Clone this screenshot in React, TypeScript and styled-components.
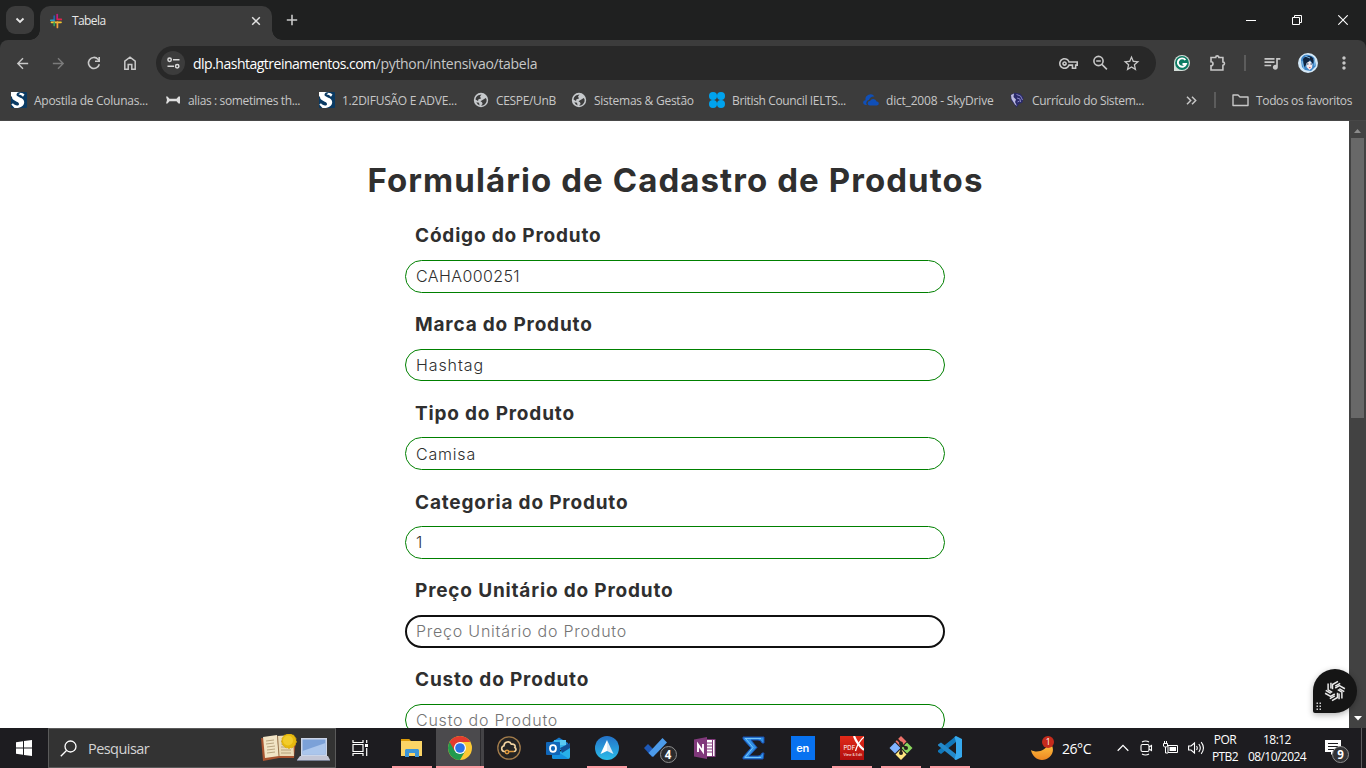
import React from 'react';
import styled, { createGlobalStyle } from 'styled-components';
import { MdArrowBack, MdArrowForward, MdOutlineVpnKey, MdStarBorder, MdQueueMusic, MdMoreVert } from 'react-icons/md';

const GlobalStyle = createGlobalStyle`
  * { box-sizing: border-box; }
  body { margin: 0; background: #fff; overflow: hidden; }
  svg { display: block; flex: none; }
`;

const uiFont = `'Open Sans', 'Noto Sans', sans-serif`;

const Screen = styled.div`
  width: 1366px;
  height: 768px;
  display: flex;
  flex-direction: column;
  overflow: hidden;
  font-family: ${uiFont};
  white-space: nowrap;
`;

/* ---------- browser chrome ---------- */
const TabStrip = styled.header`
  height: 40px;
  flex: none;
  display: flex;
  align-items: flex-end;
  padding-left: 6px;
  background: #1f2020;
`;
const TabSearch = styled.button`
  width: 28px;
  height: 28px;
  margin: 0 6px 6px 0;
  padding: 0;
  border: 0;
  border-radius: 9px;
  background: #3c3c3c;
  display: grid;
  place-items: center;
`;
const Tab = styled.div`
  position: relative;
  width: 232px;
  height: 34px;
  border-radius: 10px 10px 0 0;
  background: #3c3c3c;
  display: flex;
  align-items: center;
  padding: 0 11px 5px 8px;
  &::before, &::after {
    content: '';
    position: absolute;
    bottom: 0;
    width: 10px;
    height: 10px;
  }
  &::before { left: -10px; background: radial-gradient(circle at 0 0, transparent 9.5px, #3c3c3c 10px); }
  &::after { right: -10px; background: radial-gradient(circle at 100% 0, transparent 9.5px, #3c3c3c 10px); }
`;
const TabTitle = styled.span`
  flex: 1;
  margin-left: 8px;
  font-size: 12px;
  letter-spacing: -0.6px;
  color: #e8e8e8;
`;
const NewTab = styled.div`
  margin: 0 0 14px 14px;
`;
const WindowControls = styled.div`
  display: flex;
  margin-left: auto;
  height: 40px;
`;
const WindowButton = styled.div`
  width: 46px;
  display: grid;
  place-items: center;
`;
const ToolbarArea = styled.div`
  flex: none;
  height: 81px;
  background: #1f2020;
`;
const Bars = styled.div`
  height: 81px;
  border-radius: 8px 8px 0 0;
  border-bottom: 1px solid #474747;
  background: #3c3c3c;
`;
const NavBar = styled.nav`
  height: 46px;
  display: flex;
  align-items: center;
  padding-left: 14px;
`;
const NavButtons = styled.div`
  flex: none;
  display: flex;
  gap: 20px;
  width: 142px;
`;
const NavIcon = styled.div<{ $dim?: boolean }>`
  width: 16px;
  height: 16px;
  display: grid;
  place-items: center;
  color: ${(p) => (p.$dim ? '#7b7b7b' : '#c9c9c9')};
`;
const AddressBar = styled.div`
  flex: none;
  width: 1000px;
  height: 34px;
  border-radius: 17px;
  background: #282828;
  display: flex;
  align-items: center;
  padding: 0 15px 0 5px;
  color: #c7c7c7;
`;
const SiteInfo = styled.div`
  width: 24px;
  height: 24px;
  border-radius: 12px;
  background: #3c3c3c;
  display: grid;
  place-items: center;
`;
const Url = styled.div`
  flex: 1;
  margin-left: 8px;
  font-size: 14px;
  letter-spacing: -0.3px;
  color: #c7c7c7;
  b { font-weight: 400; color: #fff; letter-spacing: -0.5px; }
`;
const AddressIcons = styled.div`
  display: flex;
  align-items: center;
  gap: 13px;
`;
const Extensions = styled.div`
  flex: 1;
  display: flex;
  align-items: center;
  padding-left: 17px;
  color: #c7c7c7;
`;
const Slot = styled.div<{ $w: number }>`
  flex: none;
  width: ${(p) => p.$w}px;
  display: grid;
  place-items: center;
`;
const Divider = styled.span`
  flex: none;
  width: 2px;
  height: 16px;
  background: #5c5c5c;
`;
const BookmarkBar = styled.div`
  height: 28px;
  display: flex;
  align-items: center;
  padding-left: 11px;
  color: #c7c7c7;
`;
const Bookmark = styled.div<{ $w: number; $ls: number }>`
  flex: none;
  width: ${(p) => p.$w}px;
  display: flex;
  align-items: center;
  gap: 7px;
  font-size: 12px;
  letter-spacing: ${(p) => p.$ls}px;
`;

/* ---------- web page ---------- */
const Viewport = styled.div`
  height: 607px;
  flex: none;
  display: flex;
  overflow: hidden;
  background: #fff;
`;
const Page = styled.main`
  width: 1349px;
  height: 607px;
  overflow: hidden;
  font-family: 'Inter', sans-serif;
  color: #2f2f2f;
`;
const Title = styled.h1`
  margin: 38px 0 0;
  padding-left: 2px;
  height: 42px;
  line-height: 42px;
  text-align: center;
  font-size: 33px;
  font-weight: 700;
  letter-spacing: 1.08px;
`;
const Form = styled.form`
  width: 540px;
  margin: 0 auto;
  padding-top: 22.4px;
`;
const Field = styled.div`
  height: 88.75px;
`;
const Label = styled.label`
  display: block;
  height: 36.5px;
  padding-left: 10.5px;
  line-height: 26px;
  font-size: 19px;
  font-weight: 700;
  letter-spacing: 0.82px;
`;
const Input = styled.input<{ $focused?: boolean; $ls?: number }>`
  display: block;
  width: 540px;
  height: 32.7px;
  padding: 0 ${(p) => (p.$focused ? 9.5 : 10.5)}px;
  border: ${(p) => (p.$focused ? '2px solid #101010' : '1px solid #008000')};
  border-radius: 17px;
  outline: 0;
  background: #fff;
  color: #2f2f2f;
  font: 300 16px 'Inter', sans-serif;
  letter-spacing: ${(p) => p.$ls ?? 0.77}px;
  &::placeholder { color: #757575; opacity: 1; }
`;
const Scrollbar = styled.div`
  width: 17px;
  background: #424242;
  display: flex;
  flex-direction: column;
  align-items: center;
  justify-content: space-between;
  padding: 7px 0;
`;
const Thumb = styled.div`
  width: 13px;
  height: 280px;
  margin: 5px 0 auto;
  background: #686868;
`;
const Assistant = styled.div`
  position: absolute;
  left: 1313px;
  top: 669px;
  width: 44px;
  height: 44px;
  border-radius: 22px 22px 22px 2px;
  background: #151515;
  box-shadow: 0 2px 6px rgba(0, 0, 0, 0.3);
`;

/* ---------- taskbar ---------- */
const Taskbar = styled.footer`
  height: 40px;
  flex: none;
  display: flex;
  background: #1d1c20;
  color: #fff;
`;
const Start = styled.div`
  width: 48px;
  display: grid;
  place-items: center;
`;
const Search = styled.div`
  width: 288px;
  border: 1px solid #5a5a5a;
  background: #333;
  display: flex;
  align-items: center;
  padding: 0 4px 0 11px;
`;
const SearchText = styled.span`
  flex: 1;
  margin-left: 11px;
  font-size: 14.5px;
  letter-spacing: -0.55px;
  color: #d4d4d4;
`;
const TaskButton = styled.div<{ $open?: boolean; $active?: boolean }>`
  position: relative;
  width: ${(p) => (p.$active ? 48 : 40)}px;
  margin: 0 ${(p) => (p.$active ? 0 : 4.5)}px;
  display: grid;
  place-items: center;
  background: ${(p) => (p.$active ? 'linear-gradient(90deg, #4b4a4d 44px, #2c2b2e 44px, #2c2b2e 45px, #444346 45px)' : 'none')};
  border-bottom: ${(p) => (p.$open ? '2px solid #fb9ba2' : '2px solid transparent')};
  padding-top: 2px;
  &:first-child { margin-right: 6.5px; }
`;
const Apps = styled.div`
  display: flex;
`;
const Badge = styled.span<{ $x: number; $y: number; $bg: string; $s: number }>`
  position: absolute;
  left: ${(p) => p.$x}px;
  top: ${(p) => p.$y}px;
  width: ${(p) => p.$s}px;
  height: ${(p) => p.$s}px;
  border-radius: 50%;
  border: ${(p) => (p.$s > 14 ? '1px solid #8d8d8d' : '0')};
  background: ${(p) => p.$bg};
  font-size: ${(p) => (p.$s > 14 ? 11.5 : 8.5)}px;
  font-weight: ${(p) => (p.$s > 14 ? 700 : 400)};
  display: grid;
  place-items: center;
  line-height: 1;
`;
const Tray = styled.div`
  margin-left: auto;
  display: flex;
  align-items: center;
`;
const Weather = styled.div`
  position: relative;
  width: 85px;
  height: 40px;
  display: flex;
  align-items: center;
  gap: 8px;
  font-size: 14px;
  letter-spacing: -0.45px;
`;
const TrayIcons = styled.div`
  display: flex;
  align-items: center;
  width: 95px;
  gap: 9px;
  padding-left: 1px;
`;
const Stack = styled.div<{ $w: number }>`
  width: ${(p) => p.$w}px;
  text-align: center;
  font-size: 12px;
  line-height: 17px;
  letter-spacing: -0.55px;
`;
const Notice = styled.div`
  position: relative;
  width: 46px;
  height: 40px;
  padding: 11px 0 0 10px;
`;
const ShowDesktop = styled.div`
  width: 5px;
  height: 40px;
  border-left: 1px solid #5c5c5e;
`;

/* ---------- icons ---------- */
const HashtagIcon = () => (
  <svg width="16" height="16" viewBox="0 0 16 16" fill="none" strokeWidth="1.7" strokeLinecap="round">
    <path d="M6.200 3v5" stroke="#2463ae" /><path d="M9.200 1.500V6" stroke="#c21f80" />
    <path d="M9.500 6.400h3.800" stroke="#e0244c" /><path d="M2.800 7.300h3" stroke="#2a9cc8" />
    <path d="M3.500 9.300H13" stroke="#f3c52e" /><path d="M6.200 9.800v2.700" stroke="#30a35b" /><path d="M9.400 9v5.500" stroke="#f4a03a" />
  </svg>
);
const SBadge = () => (
  <svg width="16" height="16" viewBox="0 0 16 16">
    <rect width="16" height="16" rx="1" fill="#0a3a63" />
    <path d="M0 0h11.500q-6-.3-6 2.800c0 2.700 7.700 2.600 7.700 7.200 0 3.600-3 6-8 6H3.500L.3 12.500 2 11.300c1.500 2.300 6 3 6 .6C8 9.200 1 9.300 1 5L0 4z" fill="#fff" />
    <path d="M9.500.8q2.500 0 4 1.600L12 4.800Q10 2.500 7.500 2.600z" fill="#fff" />
  </svg>
);
const BowIcon = () => (
  <svg width="16" height="16" viewBox="0 0 16 16"><path d="M1 4.500h1.500l2 2.200h7l2-2.200H15v7h-1.500l-2-2.200h-7l-2 2.200H1l1-3.500z" fill="#dedede" /></svg>
);
const DotsIcon = () => (
  <svg width="16" height="16" viewBox="0 0 16 16" fill="#00a3ee">
    <circle cx="4" cy="4" r="4" /><circle cx="12" cy="4" r="4" /><circle cx="4" cy="12" r="4" /><circle cx="12" cy="12" r="4" />
  </svg>
);
const CloudIcon = () => (
  <svg width="16" height="16" viewBox="0 0 16 16" fill="#0f4fb8">
    <path d="M4 13H2.500a2.400 2.400 0 0 1 0-4.800A5 5 0 0 1 11.500 4.500 5 5 0 0 0 6 8 3 3 0 0 0 4 13z" />
    <path d="M7 13.500a2.300 2.300 0 0 1 0-4.600 3.600 3.600 0 0 1 6.600.6A2 2 0 0 1 14 13.500z" />
  </svg>
);
const BrainIcon = () => (
  <svg width="16" height="16" viewBox="0 0 16 16">
    <path d="M1.500 3 6 .8l5 .7 3.500 4-1 5-3.500 1.500-2.500 3.500-2-3-3.500-4.500z" fill="#2b2b6b" />
    <path d="m2 3 3-1.500L4.500 5 7 7.500 6 10l2 4-2-1.500L2.500 7z" fill="#bdbbe0" />
    <path d="m7.500 2.500 4 1.500 2 4M8 6l3 1 .5 3M8.500 10l2-1" stroke="#8a86c6" fill="none" />
  </svg>
);
const GlobeIcon = () => (
  <svg width="16" height="16" viewBox="0 0 16 16">
    <circle cx="8" cy="8" r="7.200" fill="#c6c9cc" />
    <path d="M2.500 7.500C3 4 5.500 2.600 8.500 2.400L7 4.600l1 1.900-2.500.7L5 9zM7.500 9.300 12.800 6l.8 1.500c.3 2.700-1.100 4.800-3.600 5.900L8 13.500l1.600-1.600L9 10.200zM3.300 10.200l2.700.6.600 2.600q-2.300-.8-3.300-3.200z" fill="#3c3c3c" />
  </svg>
);
const Grammarly = () => (
  <svg width="16" height="16" viewBox="0 0 16 16">
    <path d="M8 0a8 8 0 0 1 0 16H0V8a8 8 0 0 1 8-8z" fill="#d4ded9" /><circle cx="8" cy="8" r="6.900" fill="#0c7b63" />
    <path d="M11.400 5A4.200 4.200 0 1 0 12 9H8.500" fill="none" stroke="#fff" strokeWidth="1.900" />
  </svg>
);
const Avatar = () => (
  <svg width="20" height="20" viewBox="0 0 20 20">
    <circle cx="10" cy="10" r="10" fill="#d4e8f7" />
    <path d="M3 8c0-6 5-7 8-6s6 2 6 6l1 5-5 5-6-1-3-3z" fill="#3c84c6" />
    <path d="M5 6c3-4 9-4 11 1l-1 4-3-4-4 5-2 2z" fill="#10243f" />
    <path d="M8.500 10l3.500-2 2.500 3-.5 4-2.500 2-3-3z" fill="#f4e9ea" /><path d="M9 11h1.500M12.500 11H14" stroke="#173c70" /><path d="M11 14.600h1.500" stroke="#d64c60" />
    <path d="M4 8l2 8M16 6l1 7M7 3l5 2" stroke="#7fbbe8" />
  </svg>
);
const Chrome = () => (
  <svg width="24" height="24" viewBox="0 0 24 24">
    <circle cx="12" cy="12" r="12" fill="#fcc934" />
    <path d="M12 24A12 12 0 0 1 1.610 6L12 12l5.200 3z" fill="#229a4e" />
    <path d="M22.390 6A12 12 0 0 0 1.610 6L6.800 15 12 6z" fill="#e33b2e" />
    <circle cx="12" cy="12" r="6" fill="#fff" /><circle cx="12" cy="12" r="4.800" fill="#2c73e8" />
  </svg>
);
const Explorer = () => (
  <svg width="24" height="24" viewBox="0 0 24 24">
    <path d="M1 3h8l2 2h11v3H1z" fill="#e2a410" /><rect x="1" y="5" width="21" height="15" fill="#fbd466" /><path d="M1 3h8l1 2H1z" fill="#dc9b08" />
    <path d="M5 21v-7l1-1h12l1 1v7h-4v-4H9v4z" fill="#3c95d8" />
  </svg>
);
const CloudGold = () => (
  <svg width="24" height="24" viewBox="0 0 24 24" fill="none">
    <circle cx="12" cy="12" r="11.200" fill="#252423" stroke="#a37c4b" strokeWidth="1.300" />
    <path d="M8.500 15.500H7.200a2.900 2.900 0 0 1-.2-5.700c0-4.300 6-5.300 7.300-1.600 3-.5 4.500 1.300 3.500 3.300 2 1.200 1.200 4-.8 4" stroke="#f3d4a1" strokeWidth="1.600" /><circle cx="10" cy="16" r="1.700" stroke="#dc983e" strokeWidth="1.500" /><path d="M11.500 15.500h5.500" stroke="#dc983e" strokeWidth="1.500" />
  </svg>
);
const Outlook = () => (
  <svg width="24" height="24" viewBox="0 0 24 24">
    <path d="m6 6 7-4.500L22 7v5H6z" fill="#1778c9" /><path d="M8 4h12v10H8z" fill="#35b5ed" /><path d="M14 4h6v5h-6z" fill="#5acbf4" /><path d="m24 9v12q0 2-2 2H8q-2 0-2-2z" fill="#28b0e9" /><path d="m6 12 17 11H8q-2 0-2-2z" fill="#1490df" /><path d="m14 12 10-5v5l-8 5z" fill="#124f95" />
    <rect y="6" width="14" height="13" rx="1" fill="#1066b8" /><ellipse cx="7" cy="12.500" rx="3" ry="3.300" fill="none" stroke="#fff" strokeWidth="1.800" />
  </svg>
);
const ArrowApp = () => (
  <svg width="24" height="24" viewBox="0 0 24 24">
    <defs><linearGradient id="arrowBg" x2="0" y2="1"><stop stopColor="#2472c8" /><stop offset="1" stopColor="#2bbde9" /></linearGradient></defs>
    <circle cx="12" cy="12" r="12" fill="url(#arrowBg)" /><path d="M12 4 5.500 18 12 15z" fill="#fff" /><path d="M12 4l6.500 14-6.500-3z" fill="#dbe9f5" />
  </svg>
);
const Todo = () => (
  <svg width="24" height="24" viewBox="0 0 24 24"><path d="m0 12 4-4 8 8-4 5z" fill="#1d58b7" /><path d="M4.500 17 18.500 2 23 6.500 9 21z" fill="#4c9bea" /></svg>
);
const OneNote = () => (
  <svg width="24" height="24" viewBox="0 0 24 24">
    <rect x="11" y="3.500" width="11" height="17" fill="#fff" stroke="#80397b" /><path d="M14 7h5M14 10h5M14 13h5M14 16h5" stroke="#80397b" /><path d="M19.500 4v16" stroke="#80397b" />
    <path d="M1 3.500 14 1v22L1 20.500z" fill="#80397b" /><path d="M5 16V8.500l5 7V8" fill="none" stroke="#fff" strokeWidth="1.900" />
  </svg>
);
const Sigma = () => (
  <svg width="24" height="24" viewBox="0 0 24 24"><path d="M1 1h21v6h-2q-1-3-4-3H9l6 7.500L7 20h9q3 0 4-3h2l-1 6H1v-2l8-9L1 3z" fill="#2f8fe6" stroke="#1a4fae" strokeWidth="1" /><path d="M3 2.500h16M4 3l7 8.500L3 21.500h16" fill="none" stroke="#7cc8fa" strokeWidth="0.900" /></svg>
);
const Square = styled.div<{ $bg: string }>`
  width: 24px;
  height: 24px;
  background: ${(p) => p.$bg};
  display: grid;
  place-items: center;
  font: 600 11px/1 'Inter', sans-serif;
  letter-spacing: -0.3px;
`;
const PdfTile = styled.div`
  position: relative;
  width: 24px;
  height: 24px;
  background: linear-gradient(#e12a18, #b10e0e);
  font: 6px/1 'Inter', sans-serif;
  padding: 9px 0 0 4px;
  svg { position: absolute; left: 0; top: 0; }
  small { display: block; margin-top: 3px; font-size: 3.5px; }
`;
const GitIcon = () => (
  <svg width="24" height="24" viewBox="0 0 24 24">
    <path d="M12 0 17.500 5.500 12 11 6.500 5.500z" fill="#ec7069" /><path d="M6 6.500 11.500 12 6 17.500.5 12z" fill="#80b3ff" /><path d="M18 6.500 23.500 12 18 17.500 12.500 12z" fill="#8bd75e" /><path d="M12 13 17.500 18.500 12 24 6.500 18.500z" fill="#ffe680" />
    <path d="M8 3l4 4v11M12 8l5 4" stroke="#251f1d" strokeWidth="1.800" fill="none" /><circle cx="12" cy="7.500" r="2" fill="#251f1d" /><circle cx="17" cy="12" r="2" fill="#251f1d" /><circle cx="12" cy="17" r="2" fill="#251f1d" />
  </svg>
);
const Code = () => (
  <svg width="24" height="24" viewBox="0 0 24 24"><path d="M18 0v6L3 18l-3-2v-1.500z" fill="#1178bb" /><path d="M0 8.500 3 6.500 18 18v6L0 9.500z" fill="#2489ca" /><path d="m18 0 6 3v18l-6 3-1.500-.8L18 18V6l-1.500-5z" fill="#36a9ee" /></svg>
);

const bookmarks: [() => React.ReactNode, string, number, number][] = [
  [SBadge, 'Apostila de Colunas...', 154, -0.26],
  [BowIcon, 'alias : sometimes th...', 154, -0.36],
  [SBadge, '1.2DIFUSÃO E ADVE...', 154, -0.25],
  [GlobeIcon, 'CESPE/UnB', 98, -0.33],
  [GlobeIcon, 'Sistemas & Gestão', 138, -0.26],
  [DotsIcon, 'British Council IELTS...', 154, -0.36],
  [CloudIcon, 'dict_2008 - SkyDrive', 146, -0.2],
  [BrainIcon, 'Currículo do Sistem...', 177, -0.31],
];

const fields: { label: string; value?: string; focused?: boolean; ls?: number }[] = [
  { label: 'Código do Produto', value: 'CAHA000251', ls: 0.4 },
  { label: 'Marca do Produto', value: 'Hashtag', ls: 0.9 },
  { label: 'Tipo do Produto', value: 'Camisa', ls: 0.8 },
  { label: 'Categoria do Produto', value: '1' },
  { label: 'Preço Unitário do Produto', focused: true },
  { label: 'Custo do Produto' },
];

export default function App() {
  return (
    <Screen>
      <GlobalStyle />
      <TabStrip>
        <TabSearch aria-label="Pesquisar guias">
          <svg width="10" height="7" viewBox="0 0 10 7"><path d="m1.500 1.500 3.500 3.500 3.500-3.500" fill="none" stroke="#e6e6e6" strokeWidth="1.800" /></svg>
        </TabSearch>
        <Tab>
          <HashtagIcon />
          <TabTitle>Tabela</TabTitle>
          <svg width="10" height="10" viewBox="0 0 10 10"><path d="m1.200 1.200 7.600 7.600m0-7.600-7.600 7.600" stroke="#e2e2e2" strokeWidth="1.500" /></svg>
        </Tab>
        <NewTab><svg width="12" height="12" viewBox="0 0 12 12"><path d="M6 .8v10.400M.8 6h10.400" stroke="#c9c9c9" strokeWidth="1.600" /></svg></NewTab>
        <WindowControls>
          <WindowButton><svg width="10" height="10" viewBox="0 0 10 10"><path d="M0 5.500h10" stroke="#fff" /></svg></WindowButton>
          <WindowButton><svg width="10" height="10" viewBox="0 0 10 10"><path d="M.5 2.500h7v7h-7zM2.500 2.500v-2h7v7h-2" fill="none" stroke="#fff" /></svg></WindowButton>
          <WindowButton><svg width="10" height="10" viewBox="0 0 10 10"><path d="m.3.3 9.400 9.400m0-9.400L.3 9.700" stroke="#fff" strokeWidth="1.100" /></svg></WindowButton>
        </WindowControls>
      </TabStrip>

      <ToolbarArea>
        <Bars>
          <NavBar>
            <NavButtons>
              <NavIcon><MdArrowBack size={17} /></NavIcon>
              <NavIcon $dim><MdArrowForward size={17} /></NavIcon>
              <NavIcon><svg width="16" height="16" viewBox="0 0 16 16"><path d="M13.300 9.200A5.500 5.500 0 1 1 12 4.200L13.500 6" fill="none" stroke="currentColor" strokeWidth="1.600" /><path d="M14 2v5H9V5.400h3.400V2z" fill="currentColor" /></svg></NavIcon>
              <NavIcon><svg width="14" height="14" viewBox="0 0 14 14"><path d="M1.800 13.200V5.200L7 1.200l5.200 4v8H8.800V8.500H5.200v4.700z" fill="none" stroke="currentColor" strokeWidth="1.500" /></svg></NavIcon>
            </NavButtons>
            <AddressBar>
              <SiteInfo><svg width="13" height="12" viewBox="0 0 13 12"><g fill="none" stroke="#dadada" strokeWidth="1.500"><circle cx="2.600" cy="2.800" r="1.700" /><path d="M6 2.800h6.500M.5 9.200H7" /><circle cx="10.200" cy="9.200" r="1.700" /></g></svg></SiteInfo>
              <Url><b>dlp.hashtagtreinamentos.com</b>/python/intensivao/tabela</Url>
              <AddressIcons>
                <MdOutlineVpnKey size={19} />
                <svg width="18" height="18" viewBox="0 0 18 18" fill="none" stroke="currentColor" strokeWidth="1.600"><circle cx="7.500" cy="7" r="4.600" /><path d="m10.900 10.400 5 5M5.200 7h4.600" /></svg>
                <MdStarBorder size={19} />
              </AddressIcons>
            </AddressBar>
            <Extensions>
              <Slot $w={18}><Grammarly /></Slot>
              <Slot $w={53}><svg width="18" height="18" viewBox="0 0 18 18"><path d="M2 3.500h4.700a1.600 1.600 0 0 1 3.200 0h4V8a1.600 1.600 0 0 1 0 3.200V16H2v-4.300a2 2 0 0 0 0-4z" fill="none" stroke="currentColor" strokeWidth="1.600" /></svg></Slot>
              <Divider />
              <Slot $w={52}><MdQueueMusic size={20} /></Slot>
              <Slot $w={20}><Avatar /></Slot>
              <Slot $w={52}><MdMoreVert size={20} /></Slot>
            </Extensions>
          </NavBar>
          <BookmarkBar>
            {bookmarks.map(([Icon, text, w, ls], i) => (
              <Bookmark key={i} $w={w} $ls={ls}><Icon />{text}</Bookmark>
            ))}
            <Slot $w={11}><svg width="11" height="9" viewBox="0 0 11 9"><path d="m1 .8 3.700 3.700L1 8.200M6 .8l3.700 3.700L6 8.200" fill="none" stroke="#c7c7c7" strokeWidth="1.500" /></svg></Slot>
            <Slot $w={35}><Divider /></Slot>
            <Bookmark $w={134} $ls={-0.35}><svg width="17" height="16" viewBox="0 0 17 16"><path d="M1 3h5l2 2h8v8.500H1z" fill="none" stroke="#c7c7c7" strokeWidth="1.400" strokeLinejoin="round" /></svg>Todos os favoritos</Bookmark>
          </BookmarkBar>
        </Bars>
      </ToolbarArea>

      <Viewport>
        <Page>
          <Title>Formulário de Cadastro de Produtos</Title>
          <Form>
            {fields.map((f) => (
              <Field key={f.label}>
                <Label>{f.label}</Label>
                <Input placeholder={f.label} defaultValue={f.value} $focused={f.focused} $ls={f.ls} />
              </Field>
            ))}
          </Form>
        </Page>
        <Scrollbar>
          <svg width="7" height="5" viewBox="0 0 7 5"><path d="M0 5 3.500 1 7 5z" fill="#8b8b8b" /></svg>
          <Thumb />
          <svg width="8" height="5" viewBox="0 0 8 5"><path d="M0 0h8L4 4.500z" fill="#fff" /></svg>
        </Scrollbar>
      </Viewport>
      <Assistant>
        <svg width="44" height="44" viewBox="0 0 44 44" fill="none" stroke="#e9e9e9" strokeWidth="1.500">
          {[0, 60, 120, 180, 240, 300].map((a) => (
            <path key={a} transform={`rotate(${a} 22 22)`} d="M19.500 20.300V15.500L25 12.300M22.200 17.200 27.200 14.300" />
          ))}
          <g fill="#cfcfcf" stroke="none">
            {[34, 37, 40].map((y) => [4, 7].map((x) => <rect key={`${x}${y}`} x={x - 0.5} y={y - 0.5} width="1.500" height="1.500" />))}
          </g>
        </svg>
      </Assistant>

      <Taskbar>
        <Start><svg width="16" height="16" viewBox="0 0 16 16" fill="#fff"><path d="M0 2.200 7 1.200v6.300H0zM8 1.100 16 0v7.500H8zM0 8.500h7v6.300l-7-1zM8 8.500h8V16l-8-1.100z" /></svg></Start>
        <Search>
          <svg width="17" height="17" viewBox="0 0 17 17" fill="none" stroke="#fff" strokeWidth="1.300"><circle cx="10.500" cy="6.500" r="5.500" /><path d="M6.500 10.500.8 16.200" /></svg>
          <SearchText>Pesquisar</SearchText>
          <svg width="70" height="28" viewBox="0 0 70 28">
            <path d="M0 4 2 27l16-3 15 0 2-19-17 1z" fill="#a95531" /><path d="m2 3 14-2 2 21-14 2z" fill="#f1e4c5" /><path d="m18 22-2-20 16-1 1 21z" fill="#eadbb7" />
            <path d="M5 7l8-1M5 10l8-1M6 13l8-1M6 16l8-1M6 19l8-1M20 7h9M20 10h9M20 13h10M20 16h10M20 19h10" stroke="#a9946d" strokeWidth="0.800" /><path d="M16.500 2 18 22" stroke="#97744d" />
            <circle cx="28" cy="7" r="7.300" fill="#e6b90f" strokeDasharray="2 1.500" stroke="#d6a80c" /><circle cx="27" cy="6.500" r="5" fill="#f2cc2a" />
            <path d="M40 4h26v18H40z" fill="#cbd5e8" /><path d="M41.500 5.500h23v15h-23z" fill="#7ba1d8" /><path d="m41.500 17 23-8v11.500h-23z" fill="#abc6ec" /><path d="M39 22h28l2 4H36z" fill="#c3c6d6" /><path d="M36 26h33v1H36z" fill="#767e92" />
          </svg>
        </Search>
        <Apps>
          <TaskButton><svg width="17" height="16" viewBox="0 0 17 16" fill="none" stroke="#fff" strokeWidth="1.200"><path d="M1 4.500h10v7H1zM1 0v2.500h10V0M1 16v-2.500h10V16M14.700 0v3M14.700 8v8" /><path d="M13 4h3v3h-3z" fill="#fff" stroke="none" /></svg></TaskButton>
          <TaskButton $open><Explorer /></TaskButton>
          <TaskButton $active $open><Chrome /></TaskButton>
          <TaskButton><CloudGold /></TaskButton>
          <TaskButton><Outlook /></TaskButton>
          <TaskButton $open><ArrowApp /></TaskButton>
          <TaskButton><Todo /><Badge $x={24} $y={18} $s={17} $bg="#2b2b2d">4</Badge></TaskButton>
          <TaskButton><OneNote /></TaskButton>
          <TaskButton><Sigma /></TaskButton>
          <TaskButton><Square $bg="#0872f0">en</Square></TaskButton>
          <TaskButton $open><PdfTile>PDF<small>View &amp; Edit</small><svg width="24" height="24" viewBox="0 0 24 24" stroke="#fff" fill="none"><path d="M14 0q3 8 10 14" strokeWidth="2.200" /><path d="M24 1q-6 5-8.500 14" strokeWidth="1.300" /></svg></PdfTile></TaskButton>
          <TaskButton $open><GitIcon /></TaskButton>
          <TaskButton $open><Code /></TaskButton>
        </Apps>
        <Tray>
          <Weather>
            <svg width="23" height="24" viewBox="0 0 23 24"><defs><linearGradient id="moon" x2="0" y2="1"><stop stopColor="#ffca45" /><stop offset="1" stopColor="#ed8722" /></linearGradient></defs><path d="M0 14c5 3 15 2 18-8 9 8 1 18-7 18C6 24 1 20 0 14z" fill="url(#moon)" /></svg>
            26°C
            <Badge $x={11} $y={8} $s={12} $bg="#c42b1c">1</Badge>
          </Weather>
          <TrayIcons>
            <svg width="12" height="8" viewBox="0 0 12 8"><path d="m.7 6.700 5.300-5.300 5.300 5.300" fill="none" stroke="#fff" strokeWidth="1.300" /></svg>
            <svg width="16" height="16" viewBox="0 0 16 16" fill="none" stroke="#fff" strokeWidth="1.100"><rect x="3" y="4.500" width="8" height="7" rx="1.500" /><path d="m11 7 2.500-1.500v5L11 9M4 2q3.500-2 7 0M4 14q3.500 2 7 0" /></svg>
            <svg width="16" height="14" viewBox="0 0 16 14" fill="none" stroke="#fff"><path d="M5 4.500h9.500v7H5zM2.500 6v6H5M1.500 0v2.500M3.500 0v2.500" /><path d="M.5 2.500h4V5L3.500 6h-2l-1-1z" /><path d="M6.500 6H13v4H6.500z" fill="#fff" stroke="none" /></svg>
            <svg width="17" height="14" viewBox="0 0 17 14" fill="none" stroke="#fff" strokeWidth="1.100"><path d="M.6 5H3l3.500-3v10L3 9H.6zM8.500 5q1.500 2 0 4M10.800 3q3 4 0 8M13.200 1.200q4.500 5.800 0 11.600" /></svg>
          </TrayIcons>
          <Stack $w={28}>POR<br />PTB2</Stack>
          <Stack $w={76}>18:12<br />08/10/2024</Stack>
          <Notice>
            <svg width="17" height="17" viewBox="0 0 17 17"><path d="M0 1h16v12h-7l-3 3v-3H0z" fill="#fff" /><path d="M3 4.500h10M3 7.500h10M3 10.500h6" stroke="#1d1c20" /></svg>
            <Badge $x={17} $y={18} $s={17} $bg="#333336">9</Badge>
          </Notice>
          <ShowDesktop />
        </Tray>
      </Taskbar>
    </Screen>
  );
}
